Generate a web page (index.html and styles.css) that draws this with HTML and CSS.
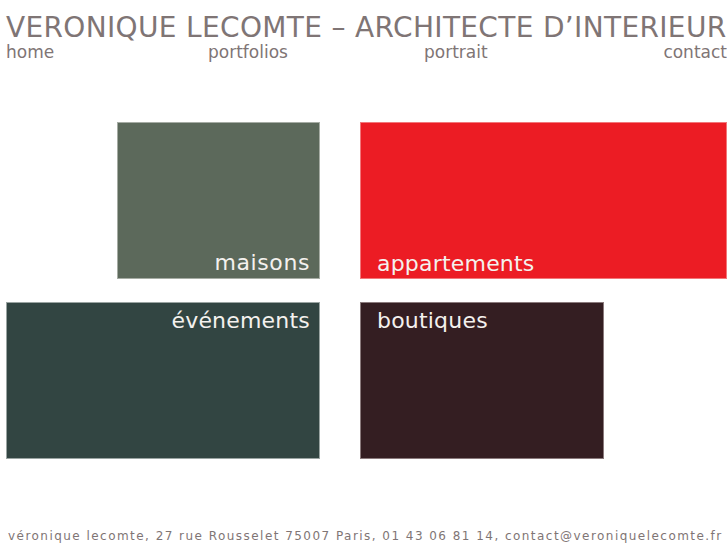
FILE: index.html
```html
<!DOCTYPE html>
<html lang="fr">
<head>
<meta charset="utf-8">
<title>Véronique Lecomte – Architecte d'intérieur</title>
<link rel="stylesheet" href="styles.css">
</head>
<body>
<div class="page">
  <header class="header">
    <h1 class="title">VERONIQUE LECOMTE – ARCHITECTE D’INTERIEUR</h1>
    <nav class="nav">
      <a class="nav-link" href="#">home</a>
      <a class="nav-link" href="#">portfolios</a>
      <a class="nav-link" href="#">portrait</a>
      <a class="nav-link nav-last" href="#">contact</a>
    </nav>
  </header>
  <main class="tiles">
    <a class="tile tile-maisons" href="#"><span class="label label-br">maisons</span></a>
    <a class="tile tile-appart" href="#"><span class="label label-bl">appartements</span></a>
    <a class="tile tile-events" href="#"><span class="label label-tr">événements</span></a>
    <a class="tile tile-boutiques" href="#"><span class="label label-tl">boutiques</span></a>
  </main>
  <footer class="footer">véronique lecomte, 27 rue Rousselet 75007 Paris, 01 43 06 81 14, contact@veroniquelecomte.fr</footer>
</div>
</body>
</html>
```
FILE: styles.css
```css
html, body {
  margin: 0;
  padding: 0;
  background: #ffffff;
}
.page {
  width: 727px;
  height: 545px;
  padding-left: 6px;
  box-sizing: border-box;
  display: flex;
  flex-direction: column;
  font-family: "DejaVu Sans", "Liberation Sans", sans-serif;
  color: #7f7575;
  overflow: hidden;
}
.header {
  display: flex;
  flex-direction: column;
}
.title {
  margin: 0;
  padding-top: 15px;
  font-weight: normal;
  font-size: 28px;
  line-height: 26px;
  letter-spacing: 0.34px;
  white-space: nowrap;
}
.nav {
  display: grid;
  grid-template-columns: 202px 216px 1fr auto;
  margin-top: 1px;
}
.nav-link {
  color: #7f7575;
  text-decoration: none;
  font-size: 17px;
  line-height: 20px;
}
.tiles {
  display: grid;
  grid-template-columns: 314px 367px;
  grid-template-rows: 157px 157px;
  column-gap: 40px;
  row-gap: 23px;
  margin-top: 60px;
}
.tile {
  display: flex;
  box-sizing: border-box;
  text-decoration: none;
  color: #f4f1ee;
}
.tile-maisons {
  justify-self: end;
  width: 203px;
  background: #5c695b;
  border: 1px solid #a6aca4;
  align-items: flex-end;
  justify-content: flex-end;
}
.tile-appart {
  background: #ec1c24;
  border: 1px solid #f2777a;
  align-items: flex-end;
  justify-content: flex-start;
}
.tile-events {
  background: #324542;
  border: 1px solid #9aa4a2;
  align-items: flex-start;
  justify-content: flex-end;
}
.tile-boutiques {
  width: 244px;
  background: #341e22;
  border: 1px solid #8a7a7c;
  align-items: flex-start;
  justify-content: flex-start;
}
.label {
  font-size: 22px;
  line-height: 26px;
  letter-spacing: 0.2px;
}
.label-br { padding: 0 9px 2px 0; letter-spacing: 0.6px; }
.label-bl { padding: 0 0 1px 16px; }
.label-tr { padding: 5px 9px 0 0; }
.label-tl { padding: 5px 0 0 16px; }
.footer {
  margin-top: auto;
  padding: 0 0 1px 2px;
  font-size: 12px;
  line-height: 16px;
  letter-spacing: 1.46px;
  white-space: nowrap;
  color: #7f7575;
}
```
